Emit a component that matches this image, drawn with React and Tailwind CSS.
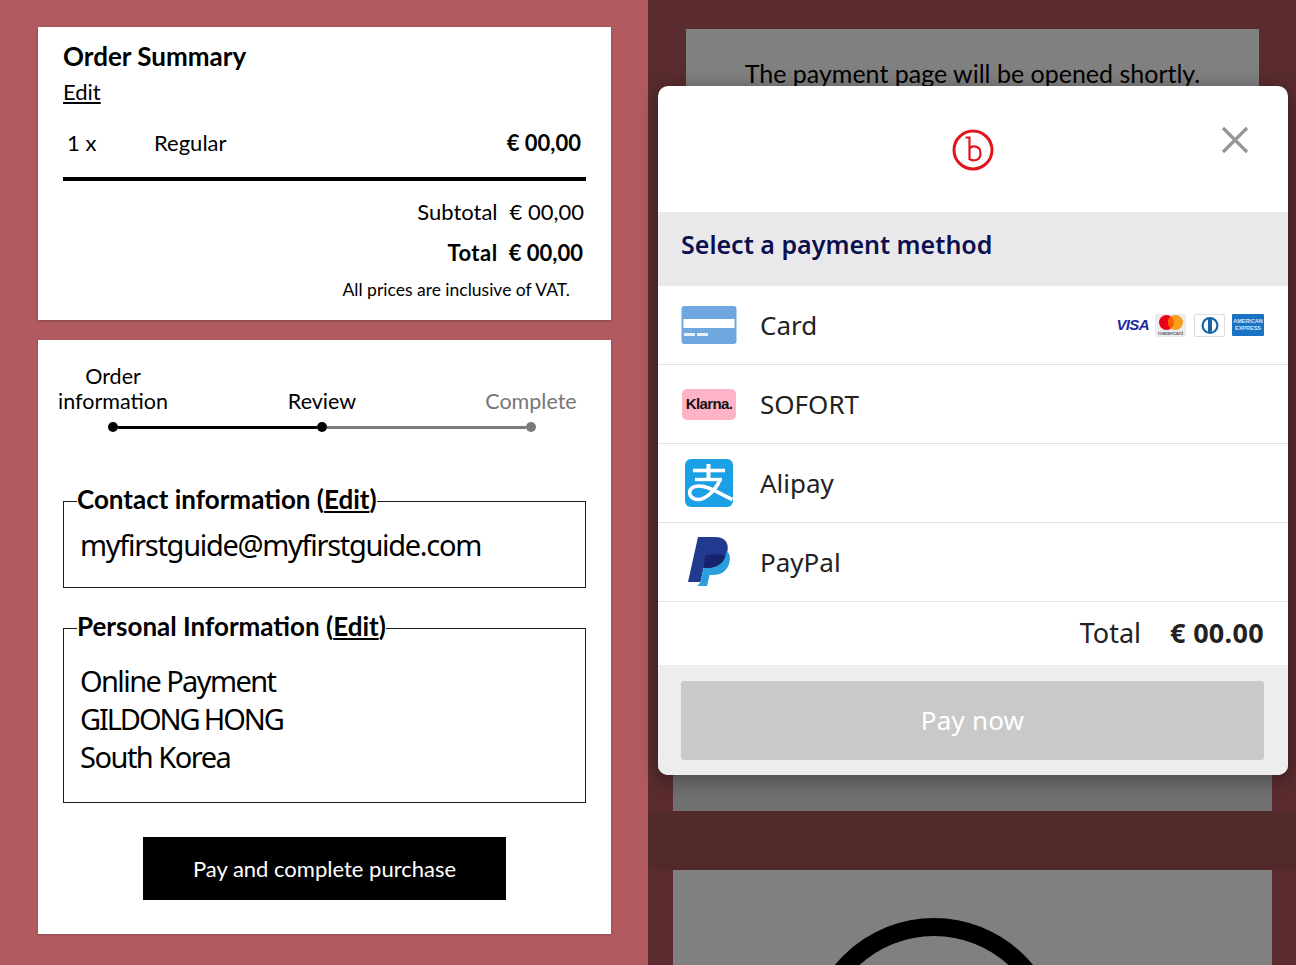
import React from "react";

const LATO = "font-['Lato','Liberation_Sans',sans-serif]";
const NOTO = "font-['Noto_Sans','Open_Sans',sans-serif]";

function CardIcon() {
  return (
    <svg width="56" height="40" viewBox="0 0 56 40">
      <rect x="0.5" y="1" width="55" height="38" rx="3" fill="#6ea8de" />
      <rect x="2.5" y="14" width="51" height="9" fill="#ffffff" />
      <rect x="3" y="28" width="11" height="3" fill="#e8f1fa" />
      <rect x="16" y="28" width="11" height="3" fill="#e8f1fa" />
    </svg>
  );
}

function Klarna() {
  return (
    <div className="w-[54px] h-[31px] rounded-[5px] bg-[#ffb3c7] flex items-center justify-center text-[15px] font-bold tracking-[-0.6px] text-[#17120f] font-['Liberation_Sans',sans-serif]">
      Klarna.
    </div>
  );
}

function Alipay() {
  return (
    <svg width="50" height="50" viewBox="0 0 50 50">
      <rect x="1" y="1" width="48" height="48" rx="6" fill="#1ba0e6" />
      <g stroke="#fff" fill="none">
        <path d="M9 12.5H41" strokeWidth="3.6" />
        <path d="M24.5 6V21" strokeWidth="4" />
        <path d="M11 21.5H38" strokeWidth="3.4" />
        <path d="M36 21.5C32 32 20 44 11 41C3 38 4 29 14 28C24 27 36 36 48.5 41.5" strokeWidth="3.6" />
      </g>
    </svg>
  );
}

function PayPal() {
  return (
    <svg width="42" height="50" viewBox="0 0 42 50">
      <path d="M10 0H27C37 0 41 6 39.5 14C37.5 25 30 31 20 31H15.5L12.5 45H0Z" fill="#1f3a8f" />
      <path d="M38.5 14C42.5 17 42.5 22 41 27C38.5 35 32 38 25 38H21.5L19 49H9.5L12.5 45L15.5 31H20C30 31 37 25 38.5 14Z" fill="#2a9fdd" />
      <path d="M15.5 31H20C28 31 34.5 27 37.5 19.5C32 16 22 17 17 19Z" fill="#17246b" />
    </svg>
  );
}

function BrandMarks() {
  return (
    <div className="flex items-center">
      <span className="text-[15px] font-bold italic tracking-[-0.6px] text-[#1a2a9c] font-['Liberation_Sans',sans-serif] mr-[6px]">VISA</span>
      <div className="w-[31px] h-[23px] bg-[#ececec] rounded-[2px] flex flex-col items-center mr-[8px]">
        <svg width="28" height="16" viewBox="0 0 28 16">
          <circle cx="9.5" cy="8.5" r="7.5" fill="#eb001b" />
          <circle cx="18.5" cy="8.5" r="7.5" fill="#f79e1b" />
          <path d="M14 2.5a7.5 7.5 0 0 1 0 12a7.5 7.5 0 0 1 0-12z" fill="#ff5f00" />
        </svg>
        <span className="text-[5px] leading-[6px] text-[#333] font-['Liberation_Sans',sans-serif]">mastercard</span>
      </div>
      <div className="w-[31px] h-[23px] bg-white border border-[#dcdcdc] rounded-[2px] flex items-center justify-center mr-[7px]">
        <svg width="24" height="19" viewBox="0 0 24 19">
          <circle cx="12" cy="9.5" r="8.5" fill="#1565a8" />
          <circle cx="12" cy="9.5" r="6.3" fill="#fff" />
          <rect x="10" y="2" width="4" height="15" rx="2" fill="#1565a8" />
        </svg>
      </div>
      <div className="w-[32px] h-[22px] bg-[#1a72c4] rounded-[1px] flex flex-col items-center justify-center text-[5.5px] leading-[7px] text-[#d4e6f7] font-bold font-['Liberation_Sans',sans-serif]">
        <span>AMERICAN</span>
        <span>EXPRESS</span>
      </div>
    </div>
  );
}

function Row({ icon, label, right, h }) {
  return (
    <div className={`${h} flex items-center pl-[23px] pr-[24px] border-b border-[#e2e2e2]`}>
      <div className="w-[56px] flex items-center justify-center shrink-0">{icon}</div>
      <span className="ml-[23px] text-[26px] text-[#222]">{label}</span>
      {right && <div className="ml-auto">{right}</div>}
    </div>
  );
}

function Box({ title, children, h }) {
  return (
    <fieldset className={`${h} border border-[#1c1c1c] px-[16px]`}>
      <legend className={`-ml-[3px] pb-[4px] text-[26px] leading-[30px] font-bold ${LATO}`}>
        {title} (<span className="underline">Edit</span>)
      </legend>
      {children}
    </fieldset>
  );
}

export default function App() {
  return (
    <div className="relative w-[1296px] h-[965px] overflow-hidden flex text-black">
      <div className={`w-[648px] h-full bg-[#b15b60] pt-[27px] pl-[38px] ${LATO}`}>
        <div className="w-[573px] h-[293px] bg-white shadow-[0_1px_3px_rgba(0,0,0,0.25)] pt-[12px] px-[25px]">
          <h2 className="text-[26px] leading-[35px] font-bold">Order Summary</h2>
          <a className="block text-[22px] leading-[30px] underline mt-[3px]">Edit</a>
          <div className="flex items-center h-[40px] mt-[15px] pr-[5px] text-[22px]">
            <span className="w-[91px] pl-[4px]">1 x</span>
            <span>Regular</span>
            <span className="ml-auto font-bold">€ 00,00</span>
          </div>
          <div className="h-[4px] bg-black mt-[15px]" />
          <div className="flex justify-end gap-[12px] pr-[2px] text-[22px] leading-[30px] mt-[16px]">
            <span>Subtotal</span>
            <span>€ 00,00</span>
          </div>
          <div className="flex justify-end gap-[11px] pr-[3px] text-[22px] leading-[30px] mt-[11px] font-bold">
            <span className="tracking-[0.5px]">Total</span>
            <span>€ 00,00</span>
          </div>
          <p className="text-[17.5px] leading-[26px] text-right pr-[16px] mt-[9px]">All prices are inclusive of VAT.</p>
        </div>

        <div className="w-[573px] h-[594px] mt-[20px] bg-white shadow-[0_1px_3px_rgba(0,0,0,0.2)] pt-[24px] pr-[5px]">
          <div className="h-[50px] flex justify-between items-end text-[21.5px] leading-[25px] text-center">
            <span className="w-[150px]">Order<br />information</span>
            <span className="w-[150px]">Review</span>
            <span className="w-[150px] text-[#777]">Complete</span>
          </div>
          <div className="mx-[70px] mt-[8px] h-[10px] flex items-center">
            <span className="w-[10px] h-[10px] rounded-full bg-black" />
            <span className="flex-1 h-[3px] bg-black" />
            <span className="w-[10px] h-[10px] rounded-full bg-black" />
            <span className="flex-1 h-[3px] bg-[#7b7b7b]" />
            <span className="w-[10px] h-[10px] rounded-full bg-[#7b7b7b]" />
          </div>
          <div className="pl-[25px] pr-[20px] mt-[52px]">
            <Box title="Contact information" h="h-[104px]">
              <p className={`mt-[7px] text-[29px] leading-[40px] tracking-[-1.3px] ${NOTO}`}>myfirstguide@myfirstguide.com</p>
            </Box>
            <div className="mt-[23px]">
              <Box title="Personal Information" h="h-[192px]">
                <div className={`mt-[17px] text-[29px] leading-[38px] ${NOTO}`}>
                  <p className="tracking-[-1.6px]">Online Payment</p>
                  <p className="tracking-[-2.1px]">GILDONG HONG</p>
                  <p className="tracking-[-1.5px]">South Korea</p>
                </div>
              </Box>
            </div>
          </div>
          <div className="flex justify-center mt-[34px] pr-[5px] pl-[10px]">
            <button className="w-[363px] h-[63px] bg-black text-white text-[22px]">Pay and complete purchase</button>
          </div>
        </div>
      </div>

      <div className={`w-[648px] h-full bg-[#5a2c2f] flex flex-col items-center pt-[29px] pl-[1px] ${LATO}`}>
        <div className="w-[573px] h-[400px] shrink-0 bg-[#808080] pt-[27px] text-center text-[25px] leading-[35px]">
          The payment page will be opened shortly.
        </div>
        <div className="w-[599px] h-[382px] shrink-0 bg-[#707070]" />
        <div className="w-full h-[59px] shrink-0 bg-[#532a2c]" />
        <div className="w-[599px] h-[200px] shrink-0 bg-[#808080] flex justify-center pt-[44px] pr-[78px]">
          <svg width="264" height="264" viewBox="0 0 264 264" className="shrink-0">
            <circle cx="132" cy="132" r="119" fill="none" stroke="#000" strokeWidth="18" />
          </svg>
        </div>
      </div>

      <div className={`absolute left-[658px] top-[86px] w-[630px] h-[689px] rounded-[10px] overflow-hidden bg-white shadow-[0_4px_20px_rgba(0,0,0,0.4)] flex flex-col ${NOTO}`}>
        <div className="relative h-[126px] shrink-0 flex items-center justify-center pt-[1px]">
          <svg width="42" height="42" viewBox="0 0 42 42">
            <circle cx="21" cy="21" r="19" fill="none" stroke="#e0151d" strokeWidth="3" />
            <path d="M13.5 8.5H17.5V31M17.5 19.5C20 16.5 28.5 16 28.5 24.5C28.5 32 21 32.5 17.5 30" fill="none" stroke="#e0151d" strokeWidth="2.2" />
          </svg>
          <svg className="absolute left-[563px] top-[40px]" width="28" height="28" viewBox="0 0 28 28">
            <path d="M2 2L26 26M26 2L2 26" stroke="#969696" strokeWidth="3.2" />
          </svg>
        </div>
        <div className="h-[74px] shrink-0 bg-[#e9e9eb] flex items-center pl-[23px] pb-[8px] text-[25px] font-semibold text-[#0b0f4f]">
          Select a payment method
        </div>
        <Row h="h-[79px]" icon={<CardIcon />} label="Card" right={<BrandMarks />} />
        <Row h="h-[79px]" icon={<Klarna />} label="SOFORT" />
        <Row h="h-[79px]" icon={<Alipay />} label="Alipay" />
        <Row h="h-[79px]" icon={<PayPal />} label="PayPal" />
        <div className="h-[63px] shrink-0 flex items-center justify-end pr-[24px] text-[27px] text-[#222]">
          <span className="mr-[29px]">Total</span>
          <span className="font-bold tracking-[0.3px]">€ 00.00</span>
        </div>
        <div className="flex-1 bg-[#ededed] pt-[16px] pl-[23px] pr-[24px]">
          <div className="h-[79px] rounded-[3px] bg-[#c9c9c9] flex items-center justify-center text-white text-[26px] tracking-[0.2px]">
            Pay now
          </div>
        </div>
      </div>
    </div>
  );
}
